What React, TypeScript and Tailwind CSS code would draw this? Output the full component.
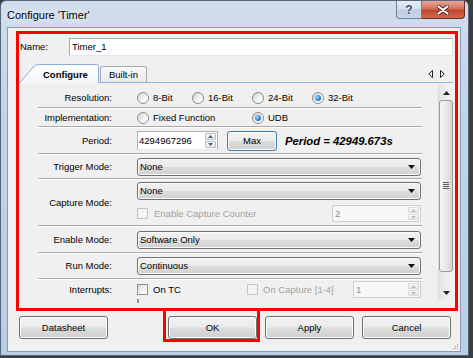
const btnFace =
  "bg-[linear-gradient(180deg,#f2f2f2_0%,#ebebeb_48%,#dddddd_52%,#cfcfcf_100%)] shadow-[inset_0_0_0_1px_#fbfbfb]";

function Radio({ checked }: { checked?: boolean }) {
  return (
    <span className="flex h-[12px] w-[12px] shrink-0 items-center justify-center rounded-full border border-[#8c8c8c] bg-[linear-gradient(135deg,#cfcfcf,#f6f6f6_60%,#ffffff)]">
      {checked && (
        <span className="h-[6px] w-[6px] rounded-full bg-[radial-gradient(circle_at_35%_35%,#9fe0ff,#2a86cf_55%,#0b3f73)]" />
      )}
    </span>
  );
}

function Check({ disabled }: { disabled?: boolean }) {
  return (
    <span
      className={
        disabled
          ? "h-[11px] w-[11px] shrink-0 border border-[#c4c4c4] bg-[#f4f4f4]"
          : "h-[11px] w-[11px] shrink-0 border border-[#8e8f8f] bg-[linear-gradient(135deg,#d4d4d4,#f4f4f4_60%,#ffffff)]"
      }
    />
  );
}

function Arrow({ up, color }: { up?: boolean; color: string }) {
  return (
    <svg width="5" height="3" viewBox="0 0 5 3">
      <path d={up ? "M0 3 L2.5 0 L5 3Z" : "M0 0 L5 0 L2.5 3Z"} fill={color} />
    </svg>
  );
}

function UpDown({ disabled }: { disabled?: boolean }) {
  const c = disabled ? "#bdbdbd" : "#4a5f80";
  const b = disabled ? "border-[#dadada]" : "border-[#b5bcc6]";
  return (
    <div className="flex h-full w-[13px] flex-col gap-px p-px">
      <div className={`flex flex-1 items-center justify-center rounded-[1px] border ${b} bg-[linear-gradient(#f9f9f9,#e8e8e8)]`}>
        <Arrow up color={c} />
      </div>
      <div className={`flex flex-1 items-center justify-center rounded-[1px] border ${b} bg-[linear-gradient(#f9f9f9,#e8e8e8)]`}>
        <Arrow color={c} />
      </div>
    </div>
  );
}

function Select({ value }: { value: string }) {
  return (
    <div className={`flex h-[18px] w-[284px] items-center justify-between rounded-[3px] border border-[#707070] pl-[2px] pr-[5px] ${btnFace}`}>
      <span>{value}</span>
      <svg width="7" height="4" viewBox="0 0 7 4">
        <path d="M0 0 L7 0 L3.5 4Z" fill="#111" />
      </svg>
    </div>
  );
}

function SpinField({ value, width }: { value: string; width: string }) {
  return (
    <div className={`flex h-[17px] ${width} items-center justify-between border border-[#cfcfcf] bg-[#f7f7f7] pl-[2px] text-[#8d8d8d]`}>
      <span>{value}</span>
      <UpDown disabled />
    </div>
  );
}

function Sep() {
  return <div className="ml-[19px] h-[2px] w-[384px] shrink-0 border-t border-[#a9a9a9] bg-white" />;
}

function Row({ label, h, children }: { label: string; h: string; children: React.ReactNode }) {
  return (
    <div className={`flex ${h} shrink-0 items-center`}>
      <div className="w-[93px] text-right">{label}</div>
      <div className="ml-[25px] flex w-[284px] items-center">{children}</div>
    </div>
  );
}

function Btn({ label }: { label: string }) {
  return (
    <div className={`flex h-[23px] w-[89px] items-center justify-center rounded-[3px] border border-[#707070] ${btnFace}`}>
      {label}
    </div>
  );
}

export default function App() {
  return (
    <div className="h-[358px] w-[473px] overflow-hidden bg-[#3d3d3d] font-['Liberation_Sans',Arial,sans-serif] text-[9.5px] leading-[12px] text-black">
      <div className="flex h-[356px] w-[469px] flex-col rounded-t-[6px] border border-[#56657a] bg-[linear-gradient(180deg,#d0dded_0%,#c0d3e9_35%,#b9cee6_100%)]">
        {/* title bar */}
        <div className="flex h-[26px] shrink-0 items-start justify-between">
          <span className="pl-[6px] pt-[8px] text-[11px] leading-[13px] [text-shadow:0_0_6px_#fff,0_0_10px_#fff]">
            Configure 'Timer'
          </span>
          <div className="mr-[3px] flex">
            <div className="flex h-[18px] w-[26px] items-center justify-center rounded-bl-[4px] border border-t-0 border-[#6f7f95] bg-[linear-gradient(180deg,#e4ecf5,#d2dfed_45%,#bccde2_55%,#c7d7ea)] text-[12px] font-bold text-[#3d4c60] [text-shadow:0_0_3px_#fff]">
              ?
            </div>
            <div className="flex h-[18px] w-[43px] items-center justify-center rounded-br-[4px] border border-t-0 border-l-0 border-[#6e2a22] bg-[linear-gradient(180deg,#e6a796,#d4705d_45%,#c2442f_55%,#cf6a52)]">
              <svg width="12" height="10" viewBox="0 0 12 10">
                <path d="M1.5 1.5 L10.5 8.5 M10.5 1.5 L1.5 8.5" stroke="#4a1a12" strokeWidth="3.6" strokeLinecap="round" />
                <path d="M1.5 1.5 L10.5 8.5 M10.5 1.5 L1.5 8.5" stroke="#fff" strokeWidth="2.2" strokeLinecap="round" />
              </svg>
            </div>
          </div>
        </div>

        {/* client area */}
        <div className="ml-[6px] flex h-[325px] w-[454px] shrink-0 flex-col border border-[#8a9bb2] bg-[#f0f0f0]">
          <div className="ml-[8px] mt-[3px] flex h-[280px] w-[442px] shrink-0 flex-col border-[3px] border-[#ff0000]">
            {/* name */}
            <div className="mt-[4px] flex h-[18px] shrink-0 items-center">
              <span className="w-[50px] pl-[1px]">Name:</span>
              <div className="flex h-[18px] w-[384px] items-center border border-[#abadb3] border-b-[#e3e9ef] border-r-[#dbdfe6] bg-white pl-[2px]">
                Timer_1
              </div>
            </div>

            {/* tab strip */}
            <div className="mt-[8px] flex h-[19px] w-[434px] shrink-0 items-end border-b border-[#8fb3de]">
              <div className="relative -mb-px h-[19px] w-[80px] shrink-0">
                <svg className="absolute inset-0" width="80" height="19" viewBox="0 0 80 19">
                  <defs>
                    <linearGradient id="tabg" x1="0" y1="0" x2="0" y2="1">
                      <stop offset="0" stopColor="#ffffff" />
                      <stop offset="1" stopColor="#f3f6fa" />
                    </linearGradient>
                  </defs>
                  <path
                    d="M0.5 19 L14.5 2.8 Q16.5 0.5 19.5 0.5 L77.5 0.5 Q79.5 0.5 79.5 2.5 L79.5 19"
                    fill="url(#tabg)"
                    stroke="#86acdb"
                  />
                </svg>
                <span className="relative block pl-[24px] pt-[5px] font-bold">Configure</span>
              </div>
              <div className="ml-[1px] flex h-[16px] w-[47px] shrink-0 items-center justify-center rounded-t-[3px] border border-b-0 border-[#a3a9b1] bg-[linear-gradient(180deg,#fafafa,#e9e9e9)]">
                Built-in
              </div>
              <svg className="mb-[5px] ml-auto mr-[8px] mt-[6px] shrink-0 self-start" width="17" height="8" viewBox="0 0 17 8">
                <path d="M4.5 0.5 L0.8 4 L4.5 7.5Z" fill="#fff" stroke="#222" />
                <path d="M12.5 0.5 L16.2 4 L12.5 7.5Z" fill="#fff" stroke="#222" />
              </svg>
            </div>

            {/* panel */}
            <div className="flex h-[224px] shrink-0">
              <div className="flex h-[220px] w-[419px] shrink-0 flex-col overflow-hidden pt-[5px]">
                <Row label="Resolution:" h="h-[19px]">
                  <span className="flex w-[55px] items-center gap-[4px]"><Radio />8-Bit</span>
                  <span className="flex w-[60px] items-center gap-[4px]"><Radio />16-Bit</span>
                  <span className="flex w-[60px] items-center gap-[4px]"><Radio />24-Bit</span>
                  <span className="flex items-center gap-[4px]"><Radio checked />32-Bit</span>
                </Row>
                <Sep />
                <Row label="Implementation:" h="h-[17px]">
                  <span className="flex w-[115px] items-center gap-[4px]"><Radio />Fixed Function</span>
                  <span className="flex items-center gap-[4px]"><Radio checked />UDB</span>
                </Row>
                <Sep />
                <Row label="Period:" h="h-[25px]">
                  <div className="flex h-[19px] w-[81px] items-center justify-between border border-[#abadb3] border-b-[#e3e9ef] bg-white pl-[1px]">
                    <span>4294967296</span>
                    <UpDown />
                  </div>
                  <div className={`ml-[9px] flex h-[20px] w-[50px] items-center justify-center rounded-[3px] border border-[#3c7fb1] ${btnFace} shadow-[inset_0_0_0_1px_#bfe3f9]`}>
                    Max
                  </div>
                  <span className="ml-[8px] text-[11.3px] font-bold italic">Period = 42949.673s</span>
                </Row>
                <Sep />
                <Row label="Trigger Mode:" h="h-[23px]">
                  <Select value="None" />
                </Row>
                <Sep />
                <div className="flex h-[45px] shrink-0">
                  <div className="w-[93px] self-center text-right">Capture Mode:</div>
                  <div className="ml-[25px] flex w-[284px] flex-col gap-[5px] pt-[2px]">
                    <Select value="None" />
                    <div className="flex h-[17px] items-center justify-between">
                      <span className="flex items-center gap-[6px] text-[#a3a3a3]">
                        <Check disabled />
                        Enable Capture Counter
                      </span>
                      <SpinField value="2" width="w-[89px]" />
                    </div>
                  </div>
                </div>
                <Sep />
                <Row label="Enable Mode:" h="h-[25px]">
                  <Select value="Software Only" />
                </Row>
                <Sep />
                <Row label="Run Mode:" h="h-[24px]">
                  <Select value="Continuous" />
                </Row>
                <Sep />
                <Row label="Interrupts:" h="h-[19px]">
                  <span className="flex w-[110px] items-center gap-[5px]"><Check />On TC</span>
                  <span className="flex items-center gap-[5px] text-[#a3a3a3]"><Check disabled />On Capture [1-4]</span>
                  <div className="ml-auto">
                    <SpinField value="1" width="w-[68px]" />
                  </div>
                </Row>
                <div className="ml-[118px] mt-[1px] shrink-0">
                  <Check />
                </div>
              </div>

              {/* scrollbar */}
              <div className="mt-[2px] flex h-[215px] w-[15px] shrink-0 flex-col border-l border-[#d9d9d9] bg-[linear-gradient(90deg,#e4e4e4,#f4f4f4)]">
                <div className="flex h-[15px] items-center justify-center">
                  <svg width="7" height="4" viewBox="0 0 7 4"><path d="M0 4 L3.5 0 L7 4Z" fill="#222" /></svg>
                </div>
                <div className="flex h-[172px] items-center justify-center rounded-[3px] border border-[#9b9b9b] bg-[linear-gradient(90deg,#f6f6f6,#e8e8e8_50%,#d6d6d6)]">
                  <svg width="6" height="8" viewBox="0 0 6 8">
                    <path d="M0 0.5 H6 M0 2.5 H6 M0 4.5 H6 M0 6.5 H6" stroke="#5f5f5f" />
                  </svg>
                </div>
                <div className="flex-1" />
                <div className="flex h-[15px] items-center justify-center">
                  <svg width="7" height="4" viewBox="0 0 7 4"><path d="M0 0 L7 0 L3.5 4Z" fill="#222" /></svg>
                </div>
              </div>
            </div>
          </div>

          {/* buttons */}
          <div className="flex flex-1 items-start">
            <div className="ml-[11px] mt-[5px]">
              <Btn label="Datasheet" />
            </div>
            <div className="ml-[55px] h-[31px] w-[97px] shrink-0 border-[3px] border-t-0 border-[#ff0000] pl-[2px] pt-[5px]">
              <Btn label="OK" />
            </div>
            <div className="ml-[5px] mt-[5px]">
              <Btn label="Apply" />
            </div>
            <div className="ml-[8px] mt-[5px]">
              <Btn label="Cancel" />
            </div>
            <svg className="mb-[1px] ml-auto mr-[1px] self-end" width="7" height="7" viewBox="0 0 7 7">
              <rect x="5" y="1" width="1" height="1" fill="#9a9a9a" />
              <rect x="3" y="3" width="1" height="1" fill="#9a9a9a" />
              <rect x="5" y="3" width="1" height="1" fill="#9a9a9a" />
              <rect x="1" y="5" width="1" height="1" fill="#9a9a9a" />
              <rect x="3" y="5" width="1" height="1" fill="#9a9a9a" />
              <rect x="5" y="5" width="1" height="1" fill="#9a9a9a" />
            </svg>
          </div>
        </div>
      </div>
    </div>
  );
}
